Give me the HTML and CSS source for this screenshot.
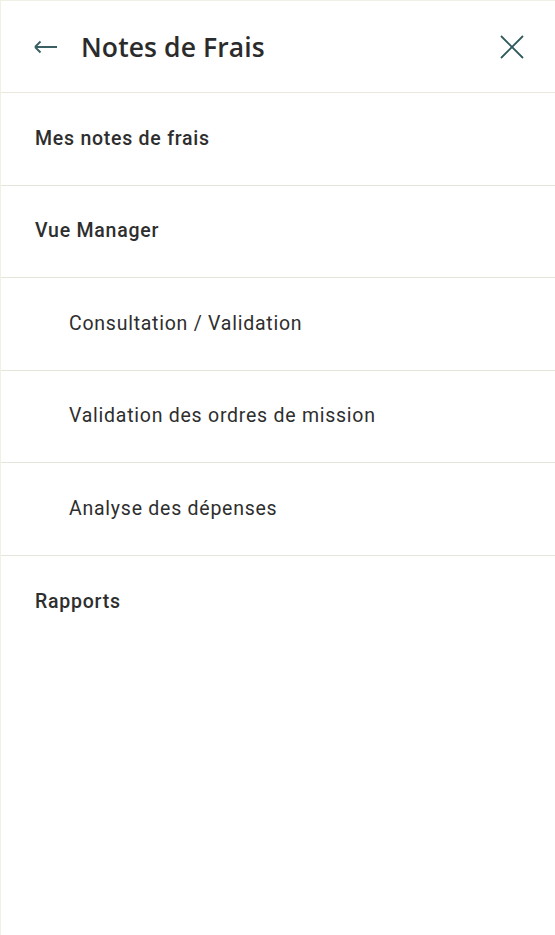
FILE: index.html
```html
<!DOCTYPE html>
<html lang="fr">
<head>
<meta charset="utf-8">
<link rel="stylesheet" href="styles.css">
</head>
<body>
<div class="panel">
  <header class="header">
    <div class="header-left">
      <svg class="icon-back" width="24" height="14" viewBox="0 0 24 14"><path d="M1 7H23M1 7L6.5 1.5M1 7L6.5 12.5" fill="none" stroke="#3a5f63" stroke-width="1.8"/></svg>
      <h1 class="title">Notes de Frais</h1>
    </div>
    <svg class="icon-close" width="24" height="24" viewBox="0 0 24 24"><path d="M1 1L23 23M23 1L1 23" fill="none" stroke="#2f5a5e" stroke-width="1.8"/></svg>
  </header>
  <nav class="menu">
    <div class="item main">Mes notes de frais</div>
    <div class="item main">Vue Manager</div>
    <div class="item sub">Consultation / Validation</div>
    <div class="item sub">Validation des ordres de mission</div>
    <div class="item sub">Analyse des dépenses</div>
    <div class="item main last">Rapports</div>
  </nav>
</div>
</body>
</html>
```
FILE: styles.css
```css
html, body {
  margin: 0;
  padding: 0;
  background: #ffffff;
}
.panel {
  width: 555px;
  height: 935px;
  box-sizing: border-box;
  border-left: 1px solid #f1f0e6;
  border-top: 1px solid #f1f0e6;
  background: #fff;
  font-family: Roboto, "Liberation Sans", sans-serif;
}
.header {
  height: 91px;
  display: flex;
  align-items: center;
  justify-content: space-between;
  padding: 0 31px 0 33px;
  border-bottom: 1px solid #e9e8da;
}
.header-left {
  display: flex;
  align-items: center;
  gap: 23px;
}
.icon-back { display: block; margin-top: 1px; }
.icon-close { display: block; }
.title {
  margin: 0;
  font-family: "Open Sans", Roboto, sans-serif;
  font-weight: 600;
  font-size: 26.5px;
  letter-spacing: 0.1px;
  color: #2b2b2b;
}
.menu { display: flex; flex-direction: column; }
.item {
  height: 92.5px;
  box-sizing: border-box;
  display: flex;
  align-items: center;
  border-bottom: 1px solid #e6e5dc;
  color: #2e2e2e;
  font-size: 19.5px;
  padding-bottom: 1px;
}
.item.main { padding-left: 34px; font-weight: 500; letter-spacing: 0.75px; }
.item.sub { padding-left: 68px; font-weight: 400; letter-spacing: 0.75px; }
.item.last { border-bottom: none; }
```
